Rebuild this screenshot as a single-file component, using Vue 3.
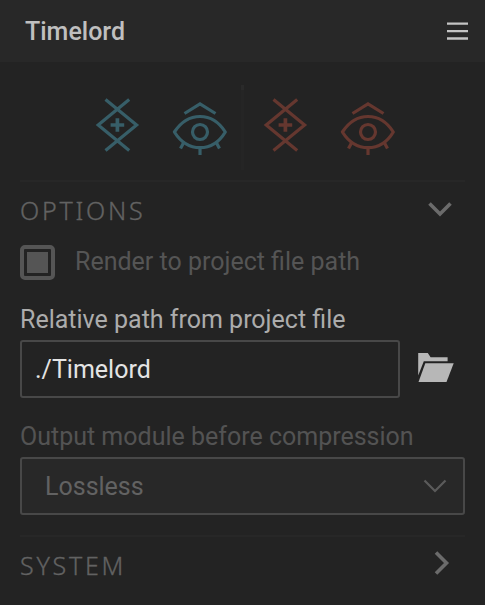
<script setup>
import { ref } from 'vue'

const path = ref('./Timelord')
const tools = [
  { name: 'cool', color: '#375e68' },
  { name: 'warm', color: '#65372f' },
]
</script>

<template>
  <main class="panel">
    <header class="header">
      <h1 class="title">Timelord</h1>
      <svg class="menu" width="21" height="18" viewBox="0 0 21 18">
        <path d="M0 1.6h21M0 9.1h21M0 16.5h21" stroke="#c4c4c4" stroke-width="2.4" />
      </svg>
    </header>

    <section class="tools">
      <template v-for="(tool, i) in tools" :key="tool.name">
        <div v-if="i > 0" class="separator"></div>
        <svg class="tool-pair" width="134" height="60" viewBox="0 0 134 60" fill="none" :stroke="tool.color" stroke-width="3.200">
          <path d="M10.500 3.500 41.600 29 10.500 54.500M34.200 3.500 3.200 29 34.200 54.500" />
          <path d="M22.400 22.200v13.600M15.600 29h13.600" stroke-width="3.700" />
          <path d="M79.400 36C86 26 95 20.500 105 20.500S124 26 130.300 36C124 46.500 115 51.700 105 51.700S86 46.500 79.400 36Z" stroke-linejoin="round" />
          <circle cx="105" cy="36" r="7.500" />
          <path d="M89.500 17.500 105 8 120.500 17.500M89 46 85.500 52.500M105 51.500V59M121 46 124.500 52.500" />
        </svg>
      </template>
    </section>

    <section class="options">
      <div class="section-head">
        <h2 class="heading">OPTIONS</h2>
        <svg class="caret-down" width="24" height="15" viewBox="0 0 24 15" fill="none">
          <path d="M1.500 1.500 12 12 22.500 1.500" stroke="#6b6b6b" stroke-width="3.600" />
        </svg>
      </div>

      <label class="check-row">
        <span class="checkbox"><span class="check-mark"></span></span>
        <span class="check-text">Render to project file path</span>
      </label>

      <div class="label path-label">Relative path from project file</div>
      <div class="path-row">
        <input v-model="path" class="path-input" type="text" spellcheck="false" />
        <svg class="folder" width="37" height="31" viewBox="0 0 37 31" fill="#b7b7b7">
          <path d="M.2 1H9.800l2.800 4.200h17v4H5.800L.2 23.500Z" />
          <path d="M7.300 11.200H35.700L28.500 30H.500Z" />
        </svg>
      </div>

      <div class="label module-label">Output module before compression</div>
      <div class="select">
        <span class="select-value">Lossless</span>
        <svg width="24" height="14" viewBox="0 0 24 14" fill="none">
          <path d="M1.500 1.500 12 12 22.500 1.500" stroke="#5b5b5b" stroke-width="2.200" />
        </svg>
      </div>
    </section>

    <section class="system">
      <h2 class="heading">SYSTEM</h2>
      <svg class="caret-right" width="16" height="24" viewBox="0 0 16 24" fill="none">
        <path d="M2 1.500 12.500 12 2 22.500" stroke="#6b6b6b" stroke-width="3.600" />
      </svg>
    </section>
  </main>
</template>

<style>
body {
  margin: 0;
  background: #fff;
}
</style>

<style scoped>
* {
  box-sizing: border-box;
}
.panel {
  width: 485px;
  height: 605px;
  overflow: hidden;
  background: #232323;
  font-family: Roboto, sans-serif;
  font-size: 25px;
  line-height: 30px;
}
.header {
  display: flex;
  justify-content: space-between;
  height: 62px;
  padding: 16px 17px 0 25px;
  background: #282828;
}
.title {
  margin: 0;
  padding-top: 1px;
  color: #bfbfbf;
  font-size: 25px;
  font-weight: 500;
}
.menu {
  margin-top: 6px;
}
.tools {
  display: flex;
  height: 118px;
  padding: 23px 0 0 95px;
}
.tool-pair {
  display: block;
  margin-top: 11px;
}
.separator {
  width: 3px;
  height: 85px;
  margin: 0 18.500px 0 12px;
  background: linear-gradient(#2a2a2a 5px, #252525 5px);
}
.options {
  height: 355px;
  margin: 0 20px;
  border-top: 2px solid #272727;
}
.section-head {
  display: flex;
  justify-content: space-between;
  height: 63px;
  padding: 14px 13px 0 0;
}
.heading {
  margin: -1px 0 0;
  color: #626262;
  font-family: "Noto Sans", sans-serif;
  font-size: 25px;
  font-weight: 300;
  letter-spacing: 2.750px;
  -webkit-text-stroke: 0.350px #626262;
}
.caret-down {
  margin-top: 6px;
}
.check-row {
  display: flex;
  gap: 20px;
  height: 35px;
  color: #555;
}
.checkbox {
  width: 35px;
  height: 35px;
  padding: 3px;
  border: 4px solid #555;
  border-radius: 5px;
}
.check-mark {
  display: block;
  width: 21px;
  height: 21px;
  background: #555;
}
.check-text {
  padding-top: 2px;
}
.label {
  white-space: nowrap;
}
.path-label {
  margin-top: 25px;
  color: #acacac;
}
.path-row {
  display: flex;
  gap: 18px;
  margin-top: 5px;
}
.path-input {
  width: 380px;
  height: 58px;
  padding: 0 13px;
  border: 2px solid #484848;
  border-radius: 3px;
  outline: none;
  background: #232323;
  color: #e4e4e4;
  font: inherit;
}
.folder {
  margin-top: 12px;
}
.module-label {
  margin-top: 24px;
  color: #535353;
}
.select {
  display: flex;
  align-items: center;
  justify-content: space-between;
  height: 58px;
  margin-top: 5px;
  padding: 0 16px 0 23px;
  border: 2px solid #484848;
  border-radius: 3px;
  background: #282828;
  color: #626262;
}
.select-value {
  padding-top: 2px;
}
.system {
  display: flex;
  justify-content: space-between;
  margin: 0 20px;
  padding: 14px 15px 0 0;
  border-top: 2px solid #272727;
}
</style>
